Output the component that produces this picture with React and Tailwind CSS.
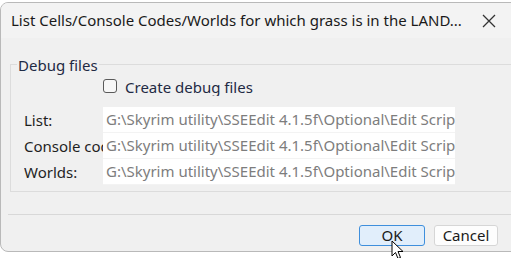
import React from "react";

const font = { fontFamily: '"Segoe UI", "Noto Sans", "Open Sans", sans-serif' };

function Row({ label }) {
  return (
    <div className="flex h-[26px] items-center">
      <div className="w-[79px] overflow-hidden whitespace-nowrap text-[15px] text-[#1f1f1f]">{label}</div>
      <div className="flex h-[26px] w-[352px] items-center overflow-hidden whitespace-nowrap border-b border-[#f3f3f3] bg-white pl-[3px] text-[15px] text-[#7d7d7d]">
        G:\Skyrim utility\SSEEdit 4.1.5f\Optional\Edit Scripts\Grass LAND.txt
      </div>
    </div>
  );
}

export default function App() {
  return (
    <div className="relative h-[258px] w-[511px] overflow-hidden bg-white" style={font}>
      <div className="mt-[2px] flex h-[250px] w-[530px] flex-col overflow-hidden rounded-lg border border-[#b9b9b9] bg-[#f0f0f0]">
        <div className="flex h-[35px] shrink-0 items-center bg-[#f3f3f3] pl-[10px]">
          <div className="w-[470px] whitespace-nowrap text-[15px] text-[#1a1a1a]">
            List Cells/Console Codes/Worlds for which grass is in the LAND...
          </div>
          <svg width="14" height="14" viewBox="0 0 14 14" className="ml-[1px]">
            <path d="M1 1 L13 13 M13 1 L1 13" stroke="#333" strokeWidth="1.3" fill="none" />
          </svg>
        </div>
        <fieldset className="ml-[9px] mt-[16px] border border-[#dcdcdc] pb-[6px] pl-[13px]">
          <legend className="-ml-[7px] h-[20px] px-[1px] text-[15px] leading-[23px] text-[#1f2a44]">Debug files</legend>
          <div className="flex h-[24px] items-center pl-[79px]">
            <div className="h-[14px] w-[14px] rounded-[3px] border border-[#5a5a5a] bg-[#f7f7f7]" />
            <div className="ml-[8px] h-[19px] overflow-hidden text-[15px] leading-[20px] text-[#1f2a44]">Create debug files</div>
          </div>
          <div className="mt-[9px]">
            <Row label="List:" />
            <Row label="Console codes:" />
            <Row label="Worlds:" />
          </div>
        </fieldset>
        <div className="ml-[7px] mt-[22px] h-px bg-[#d8d8d8]" />
        <div className="mt-[10px] flex pl-[358px]">
          <div className="flex h-[21px] w-[66px] items-center justify-center rounded-[3px] border border-[#3f8fdc] bg-[#e1eefb] text-[15px] text-[#1a1a1a]">
            OK
          </div>
          <div className="ml-[9px] flex h-[21px] w-[64px] items-center justify-center rounded-[3px] border border-[#d6d6d6] bg-[#fdfdfd] text-[15px] text-[#1a1a1a]">
            Cancel
          </div>
        </div>
      </div>
      <svg className="absolute left-[391px] top-[240px]" width="14" height="20" viewBox="0 0 14 20">
        <path d="M1 1 L1 16 L4.5 12.5 L7 18.5 L9.5 17.5 L7 11.5 L12 11.5 Z" fill="white" stroke="black" strokeWidth="1" strokeLinejoin="round" />
      </svg>
    </div>
  );
}
